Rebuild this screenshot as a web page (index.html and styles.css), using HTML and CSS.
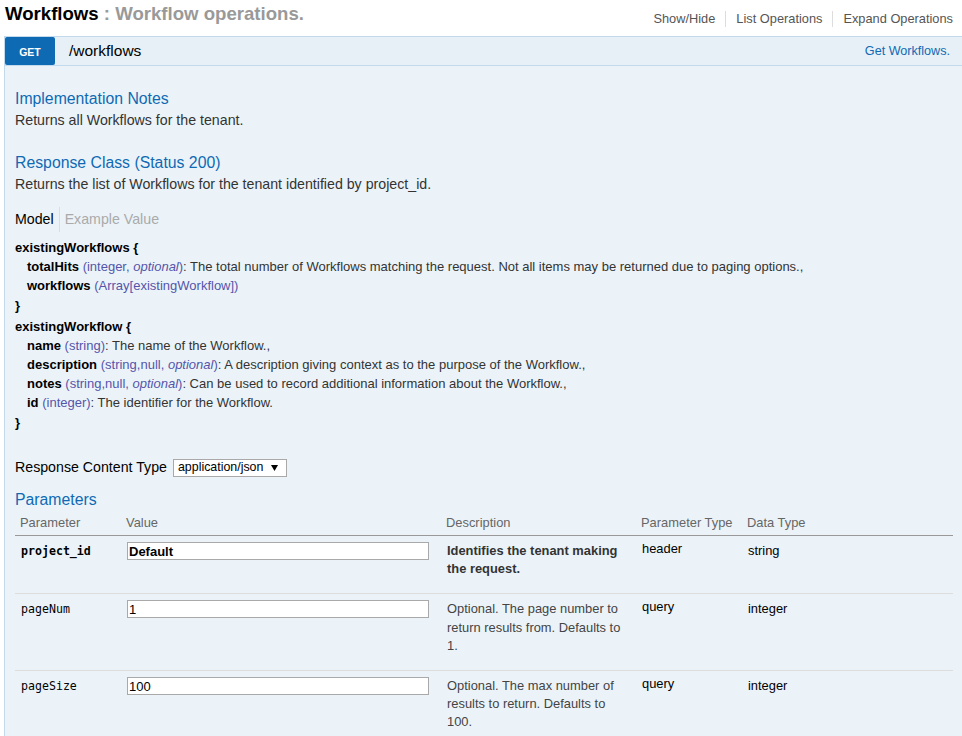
FILE: index.html
```html
<!DOCTYPE html>
<html lang="en">
<head>
<meta charset="utf-8">
<title>Workflows</title>
<link rel="stylesheet" href="styles.css">
</head>
<body>
<div class="wrap">
  <div class="res-head">
    <h2 class="res-title"><span class="name">Workflows</span><span class="sub"> : Workflow operations.</span></h2>
    <ul class="options">
      <li>Show/Hide</li>
      <li>List Operations</li>
      <li>Expand Operations</li>
    </ul>
  </div>
  <div class="op">
    <div class="op-heading">
      <span class="verb">GET</span>
      <span class="path">/workflows</span>
      <span class="summary">Get Workflows.</span>
    </div>
    <div class="op-content">
      <h4>Implementation Notes</h4>
      <p>Returns all Workflows for the tenant.</p>
      <h4>Response Class (Status 200)</h4>
      <p>Returns the list of Workflows for the tenant identified by project_id.</p>
      <ul class="sig-nav">
        <li class="sel">Model</li>
        <li>Example Value</li>
      </ul>
      <div class="model">
        <div class="block">
          <div class="strong">existingWorkflows {</div>
          <div class="props">
            <div><span class="pname">totalHits</span> <span class="ptype">(integer, <span class="popt">optional</span>)</span>: The total number of Workflows matching the request. Not all items may be returned due to paging options.,</div>
            <div><span class="pname">workflows</span> <span class="ptype">(Array[existingWorkflow])</span></div>
          </div>
          <div class="strong">}</div>
        </div>
        <div class="block">
          <div class="strong">existingWorkflow {</div>
          <div class="props">
            <div><span class="pname">name</span> <span class="ptype">(string)</span>: The name of the Workflow.,</div>
            <div><span class="pname">description</span> <span class="ptype">(string,null, <span class="popt">optional</span>)</span>: A description giving context as to the purpose of the Workflow.,</div>
            <div><span class="pname">notes</span> <span class="ptype">(string,null, <span class="popt">optional</span>)</span>: Can be used to record additional information about the Workflow.,</div>
            <div><span class="pname">id</span> <span class="ptype">(integer)</span>: The identifier for the Workflow.</div>
          </div>
          <div class="strong">}</div>
        </div>
      </div>
      <div class="ctype">
        <span class="ctype-label">Response Content Type</span>
        <span class="select"><span>application/json</span><svg class="arrow" width="7" height="6" viewBox="0 0 7 6"><path d="M0 0 H7 L3.5 6 Z" fill="#000"/></svg></span>
      </div>
      <h4>Parameters</h4>
      <table class="params">
        <colgroup>
          <col class="c1"><col class="c2"><col class="c3"><col class="c4"><col class="c5">
        </colgroup>
        <thead>
          <tr><th>Parameter</th><th>Value</th><th>Description</th><th>Parameter Type</th><th>Data Type</th></tr>
        </thead>
        <tbody>
          <tr>
            <td class="code required">project_id</td>
            <td><input class="field required" type="text" value="Default"></td>
            <td class="desc"><p class="strong-desc">Identifies the tenant making the request.</p></td>
            <td class="ptype-cell">header</td>
            <td>string</td>
          </tr>
          <tr>
            <td class="code">pageNum</td>
            <td><input class="field" type="text" value="1"></td>
            <td class="desc"><p>Optional. The page number to return results from. Defaults to 1.</p></td>
            <td class="ptype-cell">query</td>
            <td>integer</td>
          </tr>
          <tr>
            <td class="code">pageSize</td>
            <td><input class="field" type="text" value="100"></td>
            <td class="desc"><p>Optional. The max number of results to return. Defaults to 100.</p></td>
            <td class="ptype-cell">query</td>
            <td>integer</td>
          </tr>
        </tbody>
      </table>
    </div>
  </div>
</div>
</body>
</html>
```

FILE: styles.css
```css
html {
  overflow: hidden;
}

body {
  margin: 0;
  background: #fff;
  color: #333;
  font-family: "Liberation Sans", Arial, sans-serif;
  font-size: 14.2px;
}

.wrap {
  width: 960px;
  margin-left: 4px;
  line-height: 1;
}

/* resource header */
.res-head {
  display: flex;
  justify-content: space-between;
  align-items: flex-start;
  height: 36px;
}

.res-title {
  margin: 0;
  padding: 5px 0 0 1px;
  font-size: 18.6px;
  font-weight: bold;
  line-height: 1;
  color: #000;
}

.res-title .sub {
  color: #999;
}

.options {
  list-style: none;
  margin: 0;
  padding: 11px 11px 0 0;
  display: flex;
}

.options li {
  padding: 0 10px;
  border-right: 1px solid #ddd;
  font-size: 12.8px;
  line-height: 16px;
  color: #555;
}

.options li:last-child {
  border-right: 0;
  padding-right: 0;
}

/* operation heading */
.op-heading {
  display: flex;
  align-items: center;
  height: 28px;
  background: #e7f0f7;
  border: 1px solid #c3d9ec;
}

.verb {
  display: flex;
  align-items: center;
  justify-content: center;
  box-sizing: border-box;
  width: 50px;
  height: 28px;
  padding-top: 2px;
  background: #0f6ab4;
  color: #fff;
  font-size: 10.5px;
  font-weight: bold;
  border-radius: 2px;
}

.path {
  padding-left: 14px;
  font-size: 15.5px;
  color: #000;
}

.summary {
  margin-left: auto;
  padding-right: 13px;
  font-size: 12.6px;
  color: #0f6ab4;
}

/* operation content */
.op-content {
  background: #ebf3f9;
  border: 1px solid #c3d9ec;
  border-top: 0;
  padding: 10px;
}

.op-content h4 {
  margin: 0;
  padding: 15px 0 5px;
  font-size: 15.8px;
  font-weight: normal;
  line-height: 15.4px;
  color: #0f6ab4;
}

.op-content p {
  margin: 0;
  padding: 0 0 10px;
  line-height: 18.6px;
}

.sig-nav {
  list-style: none;
  margin: 3px 0 0;
  padding: 0;
  display: flex;
}

.sig-nav li {
  padding: 2px 5px 2px 0;
  margin-right: 5px;
  border-right: 1px solid #ddd;
  line-height: 21px;
  color: #aaa;
}

.sig-nav li.sel {
  color: #000;
}

.sig-nav li:last-child {
  border-right: 0;
}

.model {
  padding-top: 6px;
  font-size: 13px;
  line-height: 19px;
  color: #333;
}

.model .block + .block {
  margin-top: 2px;
}

.model .strong {
  font-weight: bold;
  color: #000;
}

.model .props {
  margin: 0 0 1px 12px;
}

.pname {
  font-weight: bold;
  color: #000;
}

.ptype {
  color: #55a;
}

.popt {
  font-style: italic;
}

.ctype {
  display: flex;
  align-items: center;
  height: 19px;
  margin-top: 26px;
}

.ctype-label {
  color: #000;
}

.select {
  display: flex;
  align-items: center;
  box-sizing: border-box;
  width: 114px;
  height: 18px;
  margin-left: 6px;
  padding: 0 8px 0 4px;
  border: 1px solid #a9a9a9;
  background: #fff;
  font-size: 12.4px;
  color: #000;
}

.select .arrow {
  margin-left: auto;
}

/* parameters table */
.params {
  width: 938px;
  border-collapse: collapse;
  table-layout: fixed;
}

.params .c1 { width: 106px; }
.params .c2 { width: 320px; }
.params .c3 { width: 195px; }
.params .c4 { width: 106px; }
.params .c5 { width: 211px; }

.params th {
  padding: 5px;
  text-align: left;
  font-weight: normal;
  font-size: 12.9px;
  line-height: 12.6px;
  color: #666;
  border-bottom: 1px solid #999;
}

.params td {
  padding: 6px 10px 6px 6px;
  vertical-align: top;
  font-size: 12.9px;
  line-height: 18.2px;
  color: #000;
  border-bottom: 1px solid #ddd;
}

.params td.code {
  font-family: "DejaVu Sans Mono", "Liberation Mono", monospace;
  font-size: 11.6px;
  color: #000;
}

.params td.required {
  font-weight: bold;
}

.params td.desc {
  color: #444;
}

.params td.desc p {
  padding-bottom: 9px;
  line-height: 18.2px;
}

.params .strong-desc {
  font-weight: bold;
  color: #333;
}

.params td.ptype-cell {
  padding-top: 4px;
}

.field {
  display: block;
  box-sizing: border-box;
  width: 302px;
  height: 18px;
  margin: 0;
  padding: 0 1px;
  border: 1px solid #a9a9a9;
  background: #fff;
  font-family: "Liberation Sans", Arial, sans-serif;
  font-size: 13px;
  color: #000;
}

.field.required {
  font-weight: bold;
}
```
